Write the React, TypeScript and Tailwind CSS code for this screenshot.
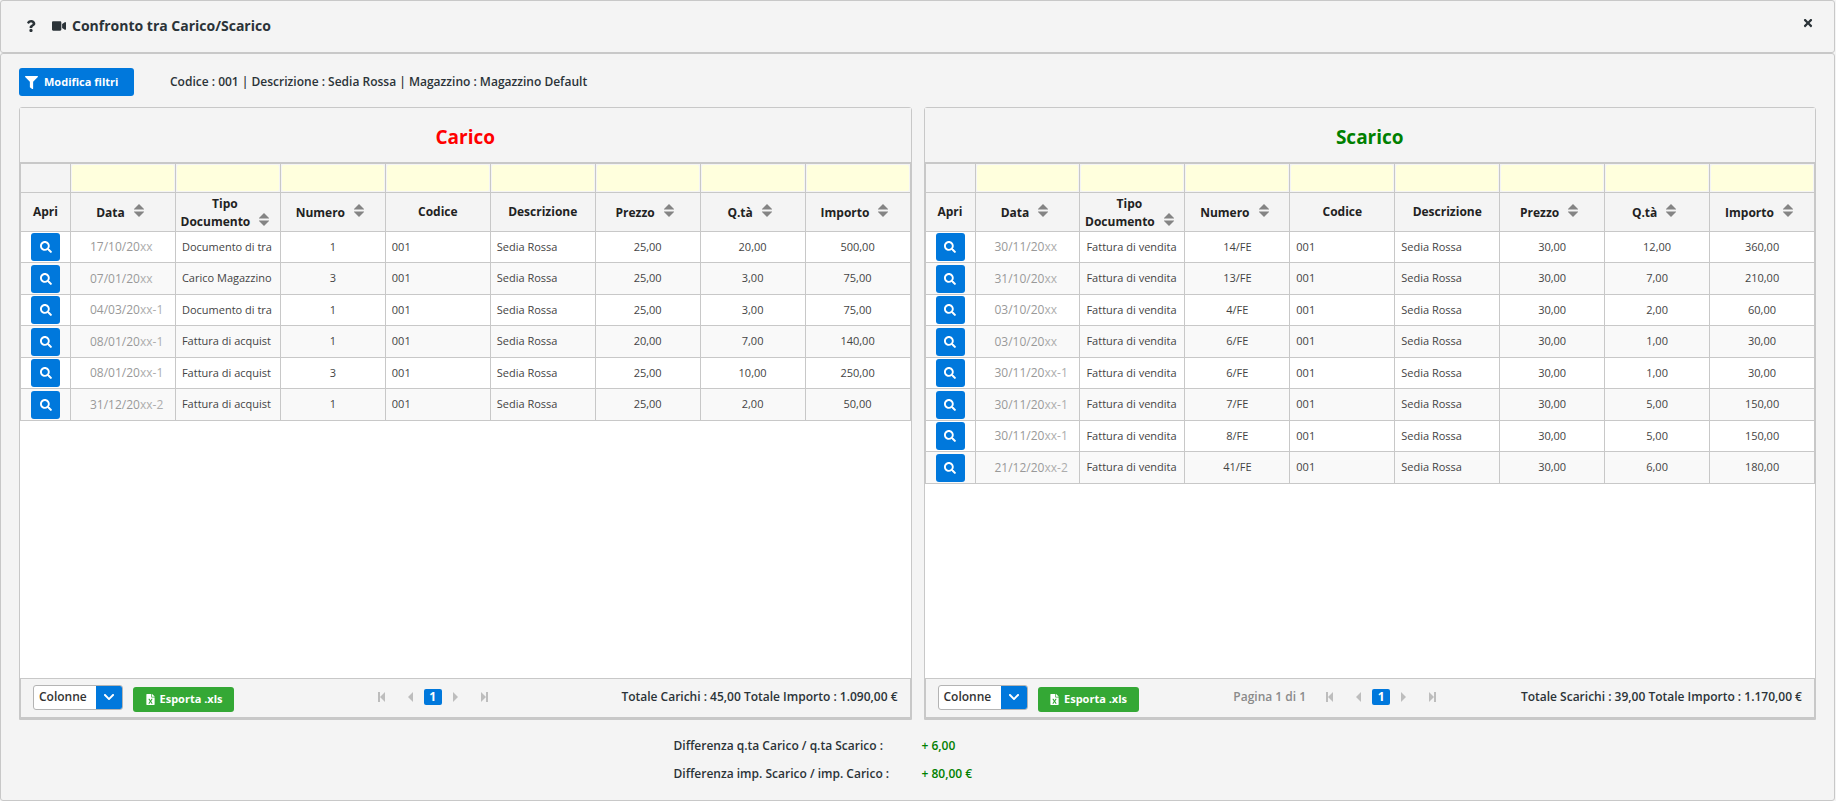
import React, { useState } from "react"
import { FaChevronDown, FaFileExcel, FaFilter, FaQuestion, FaSearch, FaTimes, FaVideo } from "react-icons/fa"

type Row = {
  date: string
  suffix: string
  type: string
  number: string
  price: string
  qty: string
  amount: string
}

const columns = [
  { label: "Data", sortable: true },
  { label: "Tipo Documento", sortable: true },
  { label: "Numero", sortable: true },
  { label: "Codice", sortable: false },
  { label: "Descrizione", sortable: false },
  { label: "Prezzo", sortable: true },
  { label: "Q.tà", sortable: true },
  { label: "Importo", sortable: true },
]

const carico: Row[] = [
  { date: "17/10/20", suffix: "xx", type: "Documento di tra", number: "1", price: "25,00", qty: "20,00", amount: "500,00" },
  { date: "07/01/20", suffix: "xx", type: "Carico Magazzino", number: "3", price: "25,00", qty: "3,00", amount: "75,00" },
  { date: "04/03/20", suffix: "xx-1", type: "Documento di tra", number: "1", price: "25,00", qty: "3,00", amount: "75,00" },
  { date: "08/01/20", suffix: "xx-1", type: "Fattura di acquist", number: "1", price: "20,00", qty: "7,00", amount: "140,00" },
  { date: "08/01/20", suffix: "xx-1", type: "Fattura di acquist", number: "3", price: "25,00", qty: "10,00", amount: "250,00" },
  { date: "31/12/20", suffix: "xx-2", type: "Fattura di acquist", number: "1", price: "25,00", qty: "2,00", amount: "50,00" },
]

const scarico: Row[] = [
  { date: "30/11/20", suffix: "xx", type: "Fattura di vendita", number: "14/FE", price: "30,00", qty: "12,00", amount: "360,00" },
  { date: "31/10/20", suffix: "xx", type: "Fattura di vendita", number: "13/FE", price: "30,00", qty: "7,00", amount: "210,00" },
  { date: "03/10/20", suffix: "xx", type: "Fattura di vendita", number: "4/FE", price: "30,00", qty: "2,00", amount: "60,00" },
  { date: "03/10/20", suffix: "xx", type: "Fattura di vendita", number: "6/FE", price: "30,00", qty: "1,00", amount: "30,00" },
  { date: "30/11/20", suffix: "xx-1", type: "Fattura di vendita", number: "6/FE", price: "30,00", qty: "1,00", amount: "30,00" },
  { date: "30/11/20", suffix: "xx-1", type: "Fattura di vendita", number: "7/FE", price: "30,00", qty: "5,00", amount: "150,00" },
  { date: "30/11/20", suffix: "xx-1", type: "Fattura di vendita", number: "8/FE", price: "30,00", qty: "5,00", amount: "150,00" },
  { date: "21/12/20", suffix: "xx-2", type: "Fattura di vendita", number: "41/FE", price: "30,00", qty: "6,00", amount: "180,00" },
]

function SortIcon() {
  return (
    <svg width="10" height="13" viewBox="0 0 10 13" fill="#848484" aria-hidden="true" className="ml-[9px] inline align-baseline">
      <path d="M5 0L10 5v.6H0V5z" />
      <path d="M0 7.4h10V8l-5 5-5-5z" />
    </svg>
  )
}

// Keeps the arrows on the same line as the last word of the label
function SortLabel({ label }: { label: string }) {
  const words = label.split(" ")
  const last = words.pop()

  return (
    <button className="pt-0.5 pr-1.5 font-bold">
      {words.join(" ")}{" "}
      <span className="whitespace-nowrap">{last}<SortIcon /></span>
    </button>
  )
}

function PageIcon({ end, flip }: { end?: boolean; flip?: boolean }) {
  return (
    <svg width="8" height="10" viewBox="0 0 8 10" fill="#bdbdbd" aria-hidden="true" className={flip ? "-scale-x-100" : ""}>
      {end && <path d="M0 0h2v10H0z" />}
      <path d="M7 0v10L2 5z" />
    </svg>
  )
}

function Pager({ info }: { info?: string }) {
  return (
    <nav aria-label="Pagine" className="ml-2.5 flex items-center">
      {info && <span className="mr-5 text-xs font-semibold text-[#8a8a8a]">{info}</span>}
      <button aria-label="Prima pagina" className="mr-5"><PageIcon end /></button>
      <button aria-label="Pagina precedente" className="mr-2.5"><PageIcon /></button>
      <button className="h-4 w-[18px] rounded-xs bg-[#0078dc] text-xs leading-4 font-bold text-white">1</button>
      <button aria-label="Pagina successiva" className="ml-2.5"><PageIcon flip /></button>
      <button aria-label="Ultima pagina" className="ml-5"><PageIcon end flip /></button>
    </nav>
  )
}

function DataPanel({ title, titleClass, rows, pageInfo, totals }: {
  title: string
  titleClass: string
  rows: Row[]
  pageInfo?: string
  totals: string
}) {
  return (
    <section className="flex min-w-0 flex-1 flex-col rounded-t-[3px] border border-[#c8c8c8] bg-white">
      <h2 className={`flex h-[54px] items-center justify-center bg-[#f4f4f4] pt-1 text-[19px] font-bold ${titleClass}`}>{title}</h2>

      <div className="min-h-[516px] flex-1 border-t border-[#c8c8c8]">
        <table className="w-full table-fixed border-collapse">
          <colgroup>
            <col className="w-[50px]" />
            {columns.map((col) => <col key={col.label} />)}
          </colgroup>
          <thead className="bg-[#f4f4f4]">
            <tr className="h-[29px]">
              <td className="border border-[#c8c8c8]" />
              {columns.map((col) => (
                <td key={col.label} className="border border-[#c8c8c8] p-px">
                  <input aria-label={`Filtra ${col.label}`} className="block h-[26px] w-full rounded-xs bg-[#ffffdd] px-1 text-xs outline-none" />
                </td>
              ))}
            </tr>
            <tr className="h-[39px] text-xs leading-[18px] text-[#222]">
              <th className="border border-[#c8c8c8] p-0 font-bold">Apri</th>
              {columns.map((col) => (
                <th key={col.label} className="border border-[#c8c8c8] p-0 font-bold">
                  {col.sortable ? <SortLabel label={col.label} /> : col.label}
                </th>
              ))}
            </tr>
          </thead>
          <tbody className="text-[11px] text-[#444]">
            {rows.map((row, i) => (
              <tr key={i} className="h-[31px] even:h-8 even:bg-[#f9f9f9]">
                <td className="border border-[#c8c8c8] p-0">
                  <button aria-label="Apri documento" className="mx-auto flex h-7 w-[29px] items-center justify-center rounded-[3px] bg-[#0078dc] text-white">
                    <FaSearch size={12} />
                  </button>
                </td>
                <td className="border border-[#c8c8c8] py-0 pr-0 pl-[19px] text-xs whitespace-nowrap">
                  <span className="font-medium text-[#999]">{row.date}</span>
                  <span className="text-[#adadad]">{row.suffix}</span>
                </td>
                <td className="border border-[#c8c8c8] py-0 pr-1 pl-1.5">
                  <div className="overflow-hidden whitespace-nowrap">{row.type}</div>
                </td>
                <td className="border border-[#c8c8c8] p-0 text-center">{row.number}</td>
                <td className="border border-[#c8c8c8] px-1.5 py-0">001</td>
                <td className="border border-[#c8c8c8] px-1.5 py-0">Sedia Rossa</td>
                <td className="border border-[#c8c8c8] p-0 text-center">{row.price}</td>
                <td className="border border-[#c8c8c8] p-0 text-center">{row.qty}</td>
                <td className="border border-[#c8c8c8] p-0 text-center">{row.amount}</td>
              </tr>
            ))}
          </tbody>
        </table>
      </div>

      <div className="flex h-[41px] items-center justify-between border border-b-2 border-[#c8c8c8] bg-[#f4f4f4] px-3 pb-0.5">
        <div className="flex items-center gap-2.5">
          <button className="flex h-[25px] overflow-hidden rounded-[3px] border border-[#b4b4b4] bg-white text-xs font-semibold text-[#333]">
            <span className="flex h-full w-[62px] items-center pl-[5px]">Colonne</span>
            <span className="flex h-full w-[26px] items-center justify-center bg-[#0078dc] text-white"><FaChevronDown size={12} /></span>
          </button>
          <button className="mt-1 flex h-[25px] w-[101px] items-center justify-center gap-1 rounded-[3px] bg-[#34a835] text-[11px] font-bold whitespace-nowrap text-white">
            <FaFileExcel size={11} />
            Esporta .xls
          </button>
        </div>
        <Pager info={pageInfo} />
        <span className="text-xs font-semibold">{totals}</span>
      </div>
    </section>
  )
}

export default function App() {
  const [open, setOpen] = useState(true)

  if (!open) return null

  return (
    <div className="flex min-h-screen flex-col bg-[#f4f4f4] pr-px font-['Open_Sans','Noto_Sans',sans-serif] text-[#2b3338]">
      <header className="flex h-[53px] items-center rounded-[3px] border border-[#c8c8c8] pr-5 pb-0.5 pl-6">
        <FaQuestion size={12} />
        <FaVideo size={14} className="ml-[15px]" />
        <h1 className="ml-1.5 text-sm font-bold">Confronto tra Carico/Scarico</h1>
        <button aria-label="Chiudi" onClick={() => setOpen(false)} className="mb-1.5 ml-auto"><FaTimes size={12} /></button>
      </header>

      <main className="flex flex-1 flex-col rounded-[3px] border border-[#c8c8c8] px-[18px] pt-3.5">
        <div className="flex items-center gap-9">
          <button className="flex h-7 w-[115px] items-center gap-1.5 rounded-[3px] bg-[#0078dc] px-1.5 text-[11px] font-bold whitespace-nowrap text-white">
            <FaFilter size={13} />
            Modifica filtri
          </button>
          <p className="text-xs font-semibold">Codice : 001 | Descrizione : Sedia Rossa | Magazzino : Magazzino Default</p>
        </div>

        <div className="mt-[11px] flex gap-3">
          <DataPanel title="Carico" titleClass="text-[#ff0000]" rows={carico} totals="Totale Carichi : 45,00 Totale Importo : 1.090,00 €" />
          <DataPanel title="Scarico" titleClass="text-[#008000]" rows={scarico} pageInfo="Pagina 1 di 1" totals="Totale Scarichi : 39,00 Totale Importo : 1.170,00 €" />
        </div>

        <dl className="mx-auto mt-4 grid grid-cols-[248px_240px] gap-y-2 text-xs leading-5 font-semibold">
          <dt>Differenza q.ta Carico / q.ta Scarico :</dt>
          <dd className="text-[#008000]">+ 6,00</dd>
          <dt>Differenza imp. Scarico / imp. Carico :</dt>
          <dd className="text-[#008000]">+ 80,00 €</dd>
        </dl>
      </main>
    </div>
  )
}
